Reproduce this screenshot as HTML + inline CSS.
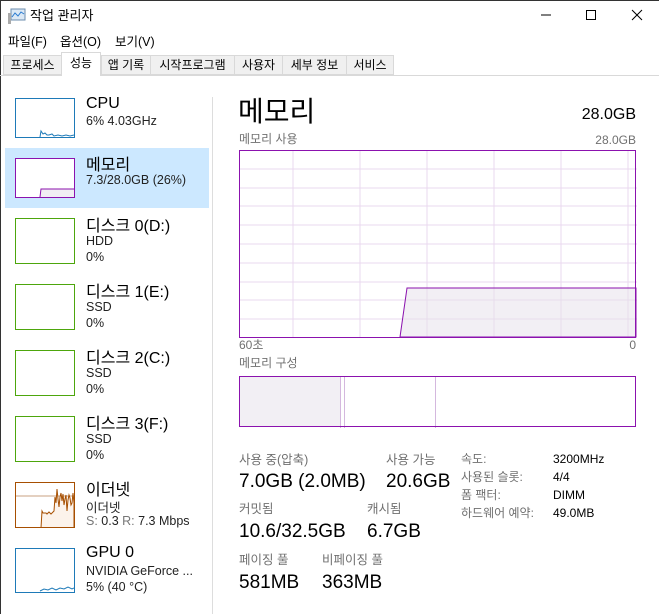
<!DOCTYPE html>
<html><head><meta charset="utf-8"><style>
*{margin:0;padding:0;box-sizing:border-box}
body{width:659px;height:614px;overflow:hidden;background:#fff;font-family:"Liberation Sans","Noto Sans CJK KR",sans-serif;color:#000;position:relative}
.a{position:absolute;white-space:nowrap}
.tab{position:absolute;top:55px;height:20px;background:#f0f0f0;border:1px solid #d9d9d9;font-size:12px;line-height:18px;text-align:center}
.th{position:absolute;left:15px;width:60px;border:1px solid}
.nm{position:absolute;left:86px;font-size:16px}
.sb{position:absolute;left:86px;font-size:12.5px;color:#222}
.lbl{position:absolute;font-size:12.5px;color:#707070}
.val{position:absolute;font-size:19px}
.g{position:absolute;font-size:12px;color:#707070}
.gv{position:absolute;font-size:12px;color:#000}
</style></head><body>
<div class="a" style="left:0;top:0;width:659px;height:1px;background:#333"></div>
<div class="a" style="left:0;top:0;width:1px;height:614px;background:#333"></div>
<svg class="a" style="left:8px;top:8px" width="18" height="16"><rect x="3" y="1" width="14" height="11" fill="#dbe8f5" stroke="#6b8cae"/><polyline points="4,9 7,5 10,8 13,4 16,6" fill="none" stroke="#2a7bd0" stroke-width="1"/><rect x="0" y="5" width="3" height="11" fill="#aaa"/></svg>
<div class="a" style="left:30px;top:5px;font-size:13px">작업 관리자</div>
<svg class="a" style="left:540px;top:8px" width="119" height="16"><line x1="1" y1="7" x2="11" y2="7" stroke="#000"/><rect x="46.5" y="2.5" width="9" height="9" fill="none" stroke="#000"/><path d="M92 2 L102 12 M102 2 L92 12" stroke="#000"/></svg>
<div class="a" style="left:8px;top:31px;font-size:12.5px">파일(F)</div>
<div class="a" style="left:60px;top:31px;font-size:12.5px">옵션(O)</div>
<div class="a" style="left:115px;top:31px;font-size:12.5px">보기(V)</div>
<div class="a" style="left:0;top:75px;width:659px;border-top:1px solid #d9d9d9"></div>
<div class="tab" style="left:3px;width:59px">프로세스</div>
<div class="tab" style="left:61px;width:40px;top:52px;height:24px;background:#fff;border-bottom:none;line-height:20px">성능</div>
<div class="tab" style="left:101px;width:50px">앱 기록</div>
<div class="tab" style="left:150px;width:85px">시작프로그램</div>
<div class="tab" style="left:234px;width:49px">사용자</div>
<div class="tab" style="left:282px;width:65px">세부 정보</div>
<div class="tab" style="left:346px;width:48px">서비스</div>
<div class="a" style="left:212px;top:97px;height:517px;border-left:1px solid #ddd"></div>
<div class="a" style="left:5px;top:148px;width:204px;height:60px;background:#cce8ff"></div>
<svg class="th" style="top:98px;height:40px;border-color:#1e7ab8" width="60" height="40"><polyline points="24,38 25,32 27,35 29,34 31,36 33,36 36,35 38,37 42,36 46,37 50,36 54,37 58,36" fill="none" stroke="#1e7ab8"/></svg>
<div class="nm" style="top:95px">CPU</div><div class="sb" style="top:114px">6% 4.03GHz</div>
<svg class="th" style="top:158px;height:40px;border-color:#8b12ae;background:#fff" width="60" height="40"><path d="M24 38 L25 30 L60 30 L60 40 L24 40Z" fill="#f1eef3" stroke="#8b12ae"/></svg>
<div class="nm" style="top:151px">메모리</div><div class="sb" style="top:173px">7.3/28.0GB (26%)</div>
<div class="th" style="top:218px;height:46px;border-color:#4da60c"></div>
<div class="nm" style="top:212px">디스크 0(D:)</div><div class="sb" style="top:234px">HDD</div><div class="sb" style="top:250px">0%</div>
<div class="th" style="top:284px;height:46px;border-color:#4da60c"></div>
<div class="nm" style="top:278px">디스크 1(E:)</div><div class="sb" style="top:300px">SSD</div><div class="sb" style="top:316px">0%</div>
<div class="th" style="top:350px;height:46px;border-color:#4da60c"></div>
<div class="nm" style="top:344px">디스크 2(C:)</div><div class="sb" style="top:366px">SSD</div><div class="sb" style="top:382px">0%</div>
<div class="th" style="top:416px;height:46px;border-color:#4da60c"></div>
<div class="nm" style="top:410px">디스크 3(F:)</div><div class="sb" style="top:432px">SSD</div><div class="sb" style="top:448px">0%</div>
<svg class="th" style="top:482px;height:46px;border-color:#a74f01" width="60" height="46"><line x1="0" y1="13" x2="60" y2="13" stroke="#c9a080"/><path d="M25 45 L26 28 L27 30 L30 30 L31 31 L33 29 L35 31 L38 28 L39 14 L40 20 L41 6 L42 16 L43 24 L44 14 L45 10 L46 18 L47 11 L48 22 L49 16 L50 12 L51 28 L52 17 L53 12 L54 15 L55 22 L56 20 L57 10 L58 20 L58 45Z" fill="#fcf3eb" stroke="#a74f01"/></svg>
<div class="nm" style="top:476px">이더넷</div><div class="sb" style="top:497px">이더넷</div><div class="sb" style="top:514px"><span style="color:#777">S:</span> 0.3 <span style="color:#777">R:</span> 7.3 Mbps</div>
<svg class="th" style="top:548px;height:45px;border-color:#1e7ab8" width="60" height="45"><polyline points="24,42 28,40 32,41 36,39 40,41 44,39 48,40 52,38 56,40 58,39" fill="none" stroke="#1e7ab8"/></svg>
<div class="nm" style="top:544px">GPU 0</div><div class="sb" style="top:564px">NVIDIA GeForce ...</div><div class="sb" style="top:580px">5% (40 °C)</div>
<div class="a" style="left:238px;top:90px;font-size:28px">메모리</div>
<div class="a" style="right:23px;top:106px;font-size:16px">28.0GB</div>
<div class="g" style="left:239px;top:130px">메모리 사용</div>
<div class="g" style="right:23px;top:133px">28.0GB</div>
<svg class="a" style="left:239px;top:150px" width="398" height="188">
<g stroke="#ead9ef" stroke-width="1">
<line x1="54" y1="0" x2="54" y2="188"/><line x1="121" y1="0" x2="121" y2="188"/><line x1="188" y1="0" x2="188" y2="188"/><line x1="255" y1="0" x2="255" y2="188"/><line x1="322" y1="0" x2="322" y2="188"/><line x1="389" y1="0" x2="389" y2="188"/>
<line x1="0" y1="19" x2="398" y2="19"/><line x1="0" y1="38" x2="398" y2="38"/><line x1="0" y1="56" x2="398" y2="56"/><line x1="0" y1="75" x2="398" y2="75"/><line x1="0" y1="94" x2="398" y2="94"/><line x1="0" y1="113" x2="398" y2="113"/><line x1="0" y1="132" x2="398" y2="132"/><line x1="0" y1="150" x2="398" y2="150"/><line x1="0" y1="169" x2="398" y2="169"/>
</g>
<path d="M161 187 L168 138 L397 138 L397 187Z" fill="rgba(230,224,234,0.5)" stroke="#8b12ae"/>
<rect x="0.5" y="0.5" width="396" height="187" fill="none" stroke="#8b12ae"/>
</svg>
<div class="g" style="left:239px;top:336px">60초</div>
<div class="g" style="right:23px;top:338px">0</div>
<div class="g" style="left:239px;top:354px">메모리 구성</div>
<svg class="a" style="left:239px;top:376px" width="398" height="52">
<rect x="1" y="1" width="101" height="50" fill="#f2eff4"/>
<line x1="101.5" y1="0" x2="101.5" y2="52" stroke="#d4b8de"/><line x1="105.5" y1="0" x2="105.5" y2="52" stroke="#d4b8de"/><line x1="196.5" y1="0" x2="196.5" y2="52" stroke="#d4b8de"/>
<rect x="0.5" y="0.5" width="396" height="50" fill="none" stroke="#8b12ae"/>
</svg>
<div class="lbl" style="left:239px;top:449px">사용 중(압축)</div>
<div class="val" style="left:239px;top:471px">7.0GB (2.0MB)</div>
<div class="lbl" style="left:386px;top:449px">사용 가능</div>
<div class="val" style="left:386px;top:471px">20.6GB</div>
<div class="lbl" style="left:239px;top:498px">커밋됨</div>
<div class="val" style="left:239px;top:521px">10.6/32.5GB</div>
<div class="lbl" style="left:367px;top:498px">캐시됨</div>
<div class="val" style="left:367px;top:521px">6.7GB</div>
<div class="lbl" style="left:239px;top:549px">페이징 풀</div>
<div class="val" style="left:239px;top:572px">581MB</div>
<div class="lbl" style="left:322px;top:549px">비페이징 풀</div>
<div class="val" style="left:322px;top:572px">363MB</div>
<div class="g" style="left:461px;top:450px">속도:</div><div class="gv" style="left:553px;top:452px">3200MHz</div>
<div class="g" style="left:461px;top:468px">사용된 슬롯:</div><div class="gv" style="left:553px;top:470px">4/4</div>
<div class="g" style="left:461px;top:486px">폼 팩터:</div><div class="gv" style="left:553px;top:488px">DIMM</div>
<div class="g" style="left:461px;top:504px">하드웨어 예약:</div><div class="gv" style="left:553px;top:506px">49.0MB</div>
</body></html>
